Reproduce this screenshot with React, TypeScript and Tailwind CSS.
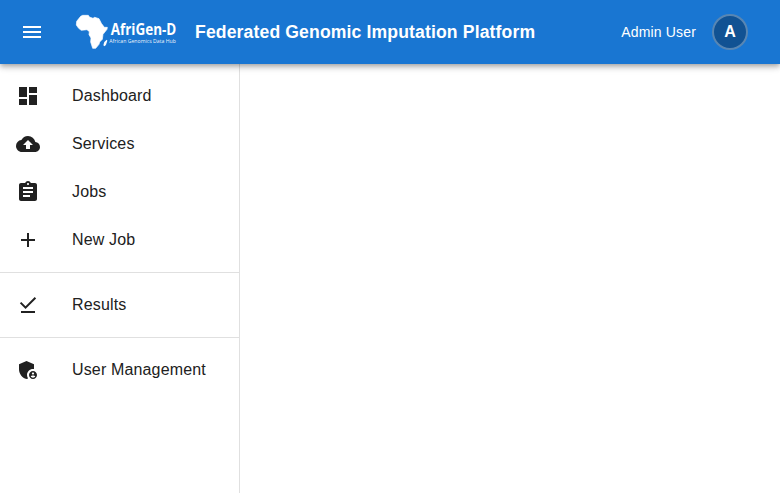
import type { ComponentType } from "react";
import {
  MdAdd,
  MdAdminPanelSettings,
  MdAssignment,
  MdCloudUpload,
  MdDashboard,
  MdMenu,
} from "react-icons/md";

type Item = { label: string; icon: ComponentType<{ className?: string }> };

function DoneIcon({ className }: { className?: string }) {
  return (
    <svg viewBox="0 0 24 24" fill="currentColor" className={className}>
      <path d="M20.13 5.41 18.72 4l-9.19 9.19-4.25-4.24-1.41 1.41 5.66 5.66zM5 18h14v2H5z" />
    </svg>
  );
}

const groups: Item[][] = [
  [
    { label: "Dashboard", icon: MdDashboard },
    { label: "Services", icon: MdCloudUpload },
    { label: "Jobs", icon: MdAssignment },
    { label: "New Job", icon: MdAdd },
  ],
  [{ label: "Results", icon: DoneIcon }],
  [{ label: "User Management", icon: MdAdminPanelSettings }],
];

function Logo() {
  return (
    <svg viewBox="0 0 309 120" className="h-10 w-[103px] overflow-visible" fill="#fff" aria-label="AfriGen-D">
      <path
        d="M20 13 L26 10 L43 10 L46 15 L57 19 L62 16 L75 20 L82 34 L91 46 L100 46 L99 52 L87 67 L85 82 L77 90 L75 97 L65 109 L56 109 L50 90 L51 78 L45 68 L46 59 L39 53 L22 55 L14 49 L7 39 L8 28 Z"
        strokeLinejoin="round"
        stroke="#fff"
        strokeWidth="2"
      />
      <path d="M98 83 L91 90 L88 100 L92 103 L96 98 L100 86 Z" />
      <text x="110" y="70" fontSize="50" fontWeight="700" textLength="197" lengthAdjust="spacingAndGlyphs" className="font-['Open_Sans',sans-serif]">
        AfriGen-D
      </text>
      <text x="106" y="92" fontSize="15" textLength="200" lengthAdjust="spacingAndGlyphs" fillOpacity="0.95" className="font-['Open_Sans',sans-serif]">
        African Genomics Data Hub
      </text>
    </svg>
  );
}

export default function App() {
  return (
    <div className="flex h-screen flex-col overflow-hidden bg-white font-['Liberation_Sans',Arial,sans-serif] text-[#212121]">
      <header className="relative z-10 flex h-16 shrink-0 items-center bg-[#1976d2] pr-8 pl-5 text-white shadow-[0px_2px_4px_-1px_rgba(0,0,0,0.2),0px_4px_5px_0px_rgba(0,0,0,0.14),0px_1px_10px_0px_rgba(0,0,0,0.12)]">
        <button aria-label="Menu" className="mr-[30px]">
          <MdMenu className="size-6" />
        </button>
        <Logo />
        <h1 className="ml-[18px] grow text-[17.6px] leading-7 font-bold tracking-[0.0075em] whitespace-nowrap">
          Federated Genomic Imputation Platform
        </h1>
        <span className="mr-4 text-sm tracking-[0.01071em]">Admin User</span>
        <div className="flex size-9 items-center justify-center rounded-full border-2 border-white/30 bg-[#115293] text-base font-bold">
          A
        </div>
      </header>
      <div className="flex min-h-0 grow">
        <nav className="w-60 shrink-0 border-r border-[#e0e0e0] pt-2">
          {groups.map((group, index) => (
            <div key={index} className={index > 0 ? "mt-2 border-t border-[#e0e0e0] pt-2" : ""}>
              {group.map(({ label, icon: Icon }) => (
                <a key={label} className="flex h-12 items-center px-4">
                  <Icon className="mr-8 size-6 shrink-0" />
                  <span className="text-base leading-6 tracking-[0.00938em]">{label}</span>
                </a>
              ))}
            </div>
          ))}
        </nav>
        <main className="grow" />
      </div>
    </div>
  );
}
